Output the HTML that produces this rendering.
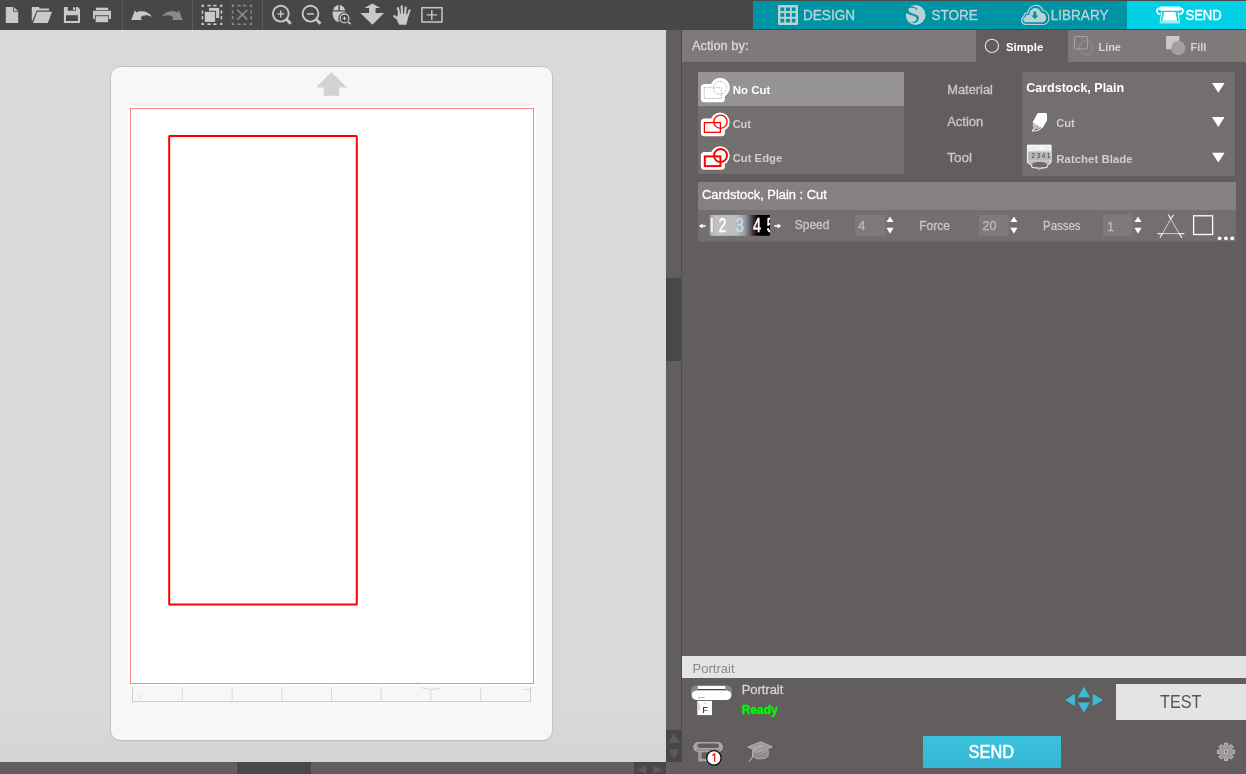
<!DOCTYPE html>
<html><head><meta charset="utf-8">
<style>
*{margin:0;padding:0;box-sizing:border-box}
html,body{width:1246px;height:774px;overflow:hidden;background:#625e5f;font-family:"Liberation Sans",sans-serif}
svg{position:absolute;left:0;top:0;will-change:transform}
text{font-family:"Liberation Sans",sans-serif}
</style></head><body>
<svg width="1246" height="774" viewBox="0 0 1246 774">
<!-- ============ BACKGROUNDS ============ -->
<rect x="0" y="0" width="1246" height="774" fill="#625e5f"/>
<rect x="0" y="0" width="1246" height="30" fill="#474747"/>
<defs><linearGradient id="cvg" x1="0" x2="0" y1="0" y2="1"><stop offset="0" stop-color="#d9d9d9"/><stop offset="0.93" stop-color="#d9d9d9"/><stop offset="1" stop-color="#d4d4d4"/></linearGradient></defs><rect x="0" y="30" width="666" height="732" fill="url(#cvg)"/>
<rect x="666" y="278" width="15" height="83" fill="#484848"/>
<rect x="681" y="30" width="1" height="732" fill="#4f4b4b"/>
<rect x="237" y="762" width="74" height="12" fill="#484848"/>
<!-- scroll buttons -->
<rect x="666" y="730" width="16" height="32" fill="#474747"/>
<path d="M674,733.2 L679.6,742.7 L668.5,742.7Z M668.5,749.3 L679.6,749.3 L674,758.7Z" fill="#5d5959"/>
<rect x="634" y="762" width="32" height="12" fill="#474747"/>
<path d="M646.5,765 L646.5,774 L637,770Z M653.3,765 L653.3,774 L662.9,770Z" fill="#5d5959"/>

<!-- ============ TOOLBAR ICONS ============ -->
<g fill="#c9c9c9">
  <!-- new doc -->
  <path d="M5.8,7 L13.2,7 L13.2,11.8 L18.2,11.8 L18.2,23 L5.8,23Z"/>
  <path d="M14.2,7.3 L17.9,10.9 L14.2,10.9Z"/>
  <!-- open folder -->
  <path d="M31.8,7 L39,7 L39.6,8.4 L49.1,8.4 L49.1,10.4 L36.8,10.4 L32.2,21.3 L31.8,21.3Z"/>
  <path d="M37.3,11.8 L52,11.8 L47.8,23 L33,23Z"/>
  <!-- save -->
  <path fill-rule="evenodd" d="M63.9,7 L67.8,7 L67.8,10.8 L76,10.8 L76,7 L77.6,7 L80,9.3 L80,23 L63.9,23Z M66,15.2 L77.9,15.2 L77.9,21 L66,21Z"/>
  <rect x="73" y="7.3" width="2.2" height="2.6"/>
  <!-- print -->
  <rect x="95.9" y="7.7" width="12.2" height="2.4"/>
  <path d="M93,10.8 L111,10.8 L111,19 L108.8,19 L108.8,15.2 L94.8,15.2 L94.8,19 L93,19Z"/>
  <rect x="95.7" y="16.2" width="12.4" height="6"/>
</g>
<rect x="122" y="0" width="1" height="30" fill="#5f5b5b"/>
<rect x="192" y="0" width="1" height="30" fill="#5f5b5b"/>
<rect x="262" y="0" width="1" height="30" fill="#5f5b5b"/>
<!-- undo / redo -->
<path d="M135,10.3 L136.3,12.4 C141,10 148.5,10.8 152.4,17.3 C148,14.6 143,14.8 140.6,17.4 L141.8,19.9 L131.2,19.9Z" fill="#c9c9c9"/>
<path d="M178.8,10.3 L177.5,12.4 C172.8,10 165.3,10.8 161.4,17.3 C165.8,14.6 170.8,14.8 173.2,17.4 L172,19.9 L182.6,19.9Z" fill="#8a8a8a"/>
<!-- group -->
<g fill="#c9c9c9"><rect x="201.70" y="4.80" width="2.3" height="1.6"/><rect x="201.70" y="4.80" width="1.6" height="2.3"/><rect x="219.90" y="4.80" width="2.3" height="1.6"/><rect x="220.60" y="4.80" width="1.6" height="2.3"/><rect x="201.70" y="23.40" width="2.3" height="1.6"/><rect x="201.70" y="22.70" width="1.6" height="2.3"/><rect x="219.90" y="23.40" width="2.3" height="1.6"/><rect x="220.60" y="22.70" width="1.6" height="2.3"/><rect x="207.43" y="4.80" width="3.3" height="1.6"/><rect x="207.43" y="23.40" width="3.3" height="1.6"/><rect x="201.70" y="10.42" width="1.6" height="3.3"/><rect x="220.60" y="10.42" width="1.6" height="3.3"/><rect x="213.17" y="4.80" width="3.3" height="1.6"/><rect x="213.17" y="23.40" width="3.3" height="1.6"/><rect x="201.70" y="16.08" width="1.6" height="3.3"/><rect x="220.60" y="16.08" width="1.6" height="3.3"/></g>
<rect x="209" y="7.9" width="10.2" height="10.1" fill="#c9c9c9"/>
<rect x="203.8" y="10.8" width="12.3" height="12.1" fill="#474747"/>
<rect x="204.8" y="11.8" width="10.3" height="10.1" fill="#c9c9c9"/>
<!-- ungroup -->
<g fill="#8a8a8a"><rect x="231.80" y="4.80" width="2.3" height="1.5"/><rect x="231.80" y="4.80" width="1.5" height="2.3"/><rect x="249.70" y="4.80" width="2.3" height="1.5"/><rect x="250.50" y="4.80" width="1.5" height="2.3"/><rect x="231.80" y="23.50" width="2.3" height="1.5"/><rect x="231.80" y="22.70" width="1.5" height="2.3"/><rect x="249.70" y="23.50" width="2.3" height="1.5"/><rect x="250.50" y="22.70" width="1.5" height="2.3"/><rect x="237.42" y="4.80" width="3.3" height="1.5"/><rect x="237.42" y="23.50" width="3.3" height="1.5"/><rect x="231.80" y="10.42" width="1.5" height="3.3"/><rect x="250.50" y="10.42" width="1.5" height="3.3"/><rect x="243.08" y="4.80" width="3.3" height="1.5"/><rect x="243.08" y="23.50" width="3.3" height="1.5"/><rect x="231.80" y="16.08" width="1.5" height="3.3"/><rect x="250.50" y="16.08" width="1.5" height="3.3"/></g>
<path d="M237.3,9.8 L247.3,19.6 M247.3,9.8 L237.3,19.6" stroke="#8a8a8a" stroke-width="1.6"/>
<!-- zoom in -->
<g stroke="#c9c9c9" fill="none">
  <circle cx="280.8" cy="13.7" r="7.9" stroke-width="1.9"/>
  <path d="M286.6,19.5 L290.8,23.7" stroke-width="2.8"/>
  <path d="M277.3,13.9 L284.3,13.9 M280.8,10.4 L280.8,17.4" stroke-width="1.4"/>
  <circle cx="310.5" cy="13.7" r="7.9" stroke-width="1.9"/>
  <path d="M316.3,19.5 L320.5,23.7" stroke-width="2.8"/>
  <path d="M307,13.9 L314,13.9" stroke-width="1.5"/>
</g>
<!-- zoom selection (mouse + magnifier) -->
<g>
  <ellipse cx="339.1" cy="13.4" rx="6.5" ry="8.6" fill="#c9c9c9"/>
  <rect x="338.5" y="4" width="1.3" height="7" fill="#474747"/>
  <rect x="332" y="10.3" width="14" height="1.2" fill="#474747"/>
  <circle cx="344.5" cy="18.4" r="6.2" fill="#474747"/>
  <circle cx="344.5" cy="18.4" r="4.4" fill="none" stroke="#c9c9c9" stroke-width="1.3"/>
  <path d="M347.6,21.5 L350.8,24.4" stroke="#474747" stroke-width="3"/>
  <path d="M347.6,21.5 L350.6,24.2" stroke="#c9c9c9" stroke-width="1.6"/>
  <path d="M342.6,18.4 L346.4,18.4 M344.5,16.5 L344.5,20.3" stroke="#c9c9c9" stroke-width="1"/>
</g>
<!-- fit arrow -->
<path d="M372.4,3.4 L380.2,8 L375.6,8 L375.6,13 L384,13 L372.4,24.8 L360.4,13 L369.1,13 L369.1,8 L364.4,8Z" fill="#c9c9c9"/>
<!-- hand -->
<g stroke="#c9c9c9" stroke-linecap="round" fill="none">
  <path d="M397.9,8 L399.6,15" stroke-width="2.1"/>
  <path d="M401.7,6.2 L402,15" stroke-width="2.1"/>
  <path d="M405.7,7.5 L404.8,15" stroke-width="2.1"/>
  <path d="M409.6,10.2 L407.4,16.5" stroke-width="2"/>
  <path d="M394.3,16.2 L399,20" stroke-width="2.2"/>
</g>
<path d="M398,13.5 L408.5,14.2 L407.8,19 L406.3,24.8 L399.2,24.8 L396.5,19Z" fill="#c9c9c9"/>
<!-- frame plus -->
<rect x="421.9" y="7.7" width="20.1" height="14.3" fill="none" stroke="#c9c9c9" stroke-width="1.5"/>
<path d="M426.6,14.9 L437.2,14.9 M431.8,9.9 L431.8,20" stroke="#c9c9c9" stroke-width="1.4"/>

<!-- ============ NAV ============ -->
<rect x="753" y="1" width="374" height="28" fill="#0093a3"/>
<rect x="1127" y="1" width="119" height="28" fill="#00d1e7"/>
<!-- grid icon -->
<rect x="778" y="5" width="20" height="20" rx="1.2" fill="#b9d2d6"/>
<g fill="#0093a3">
  <rect x="780.4" y="7.5" width="3.8" height="3.6"/><rect x="785.9" y="7.5" width="4.1" height="3.6"/><rect x="791.8" y="7.5" width="3.7" height="3.6"/>
  <rect x="780.4" y="13.1" width="3.8" height="3.7"/><rect x="785.9" y="13.1" width="4.1" height="3.7"/><rect x="791.8" y="13.1" width="3.7" height="3.7"/>
  <rect x="780.4" y="18.8" width="3.8" height="3.7"/><rect x="785.9" y="18.8" width="4.1" height="3.7"/><rect x="791.8" y="18.8" width="3.7" height="3.7"/>
</g>
<text stroke="#b9d5d9" stroke-width="0.3" x="803" y="20" font-size="14.7" fill="#b9d5d9" textLength="52" lengthAdjust="spacingAndGlyphs">DESIGN</text>
<!-- store S -->
<circle cx="915.6" cy="15" r="9.9" fill="#b9d2d6"/>
<path d="M909.2,7.2 C908.2,8.8 908.2,11.2 909.6,12.3 C911.5,13.6 916,14.2 918.2,16 C919.3,17.3 919,20.5 917,21.9 C915.3,23 912.5,23.3 910.5,23 C913.2,22.6 915.8,21.5 916.6,19.5 C917.2,17.8 915.8,16.6 913.5,15.8 C910.8,15 907.8,14.3 906,13 L904,13 L904,4 L909,4Z" fill="#0093a3"/><path d="M909,7.4 C912,6.7 915.5,7.2 917.4,9.6" fill="none" stroke="#0093a3" stroke-width="1.2"/>
<text stroke="#b9d5d9" stroke-width="0.3" x="931.5" y="20" font-size="14.7" fill="#b9d5d9" textLength="46.2" lengthAdjust="spacingAndGlyphs">STORE</text>
<!-- cloud -->
<path d="M1025.5,24.3 C1021.5,24.3 1020.2,18.5 1023.7,16.5 C1024.2,13.5 1026.5,12.8 1027.8,13 C1028.8,4 1040.5,2.8 1042.8,10.5 C1050,11 1051.5,23.8 1043.5,24.5Z" fill="none" stroke="#b9d2d6" stroke-width="1.2"/>
<path d="M1025.8,22.2 C1022.8,22.2 1022.4,17.6 1025.3,17.3 C1025.3,15 1027.5,14.5 1029.2,15 C1029.6,6.6 1039.2,5.6 1041,12.6 C1047.2,12.8 1048,22.2 1042.5,22.2Z" fill="#b9d2d6"/>
<path d="M1033.4,11.4 L1036.3,11.4 L1036.3,15.4 L1038.8,15.4 L1034.85,19.1 L1031.3,15.4 L1033.4,15.4Z" fill="#0093a3"/>
<text stroke="#b9d5d9" stroke-width="0.3" x="1050.7" y="20" font-size="14.7" fill="#b9d5d9" textLength="57.8" lengthAdjust="spacingAndGlyphs">LIBRARY</text>
<!-- send machine icon -->
<g fill="#ffffff">
  <rect x="1158.9" y="6.4" width="22.1" height="4.3" rx="2"/>
  <path d="M1157.9,8.6 C1156,10.8 1156.6,13.6 1159.8,14.1" fill="none" stroke="#fff" stroke-width="1.9" stroke-linecap="round"/>
  <path d="M1181.9,8.6 C1183.8,10.8 1183.2,13.6 1180,14.1" fill="none" stroke="#fff" stroke-width="1.9" stroke-linecap="round"/>
  <path d="M1164.1,12 L1175.5,12 L1177.2,20.8 L1162.4,20.8Z"/>
  <path d="M1161.3,12 L1162.4,12 L1160.8,21.5 L1159.8,21.5Z"/>
  <path d="M1177.4,12 L1178.5,12 L1180,21.5 L1179,21.5Z"/>
</g>
<rect x="1159.7" y="20.8" width="20.2" height="2.7" fill="#9aeef5"/>
<text x="1185.4" y="20" font-size="15" fill="#ffffff" stroke="#ffffff" stroke-width="0.45" textLength="36.4" lengthAdjust="spacingAndGlyphs">SEND</text>

<!-- ============ MAT ============ -->
<rect x="110.5" y="67.5" width="442" height="674" rx="10" fill="#c8c8c8"/><rect x="110.5" y="66.5" width="442" height="674" rx="10" fill="#f7f7f7" stroke="#c2c2c2" stroke-width="1"/>
<path d="M331.4,71.9 L347.1,87.6 L339.3,87.6 L339.3,95.8 L323.8,95.8 L323.8,87.6 L316,87.6Z" fill="#d1d2d2"/>
<rect x="127.5" y="105" width="409" height="581" fill="#ffffff"/>
<rect x="132.5" y="104.5" width="398" height="1" fill="#e3e3e3"/>
<rect x="130.5" y="108.5" width="403" height="575" fill="none" stroke="#ff8585" stroke-width="1"/>
<rect x="169.2" y="136" width="187.6" height="468.6" fill="none" stroke="#ff0000" stroke-width="2" rx="0.5"/>
<!-- ruler -->
<text x="137" y="699" font-size="6" fill="#d8d8d8">½</text>
<path d="M132.5,687 L132.5,701.5 L530.5,701.5 L530.5,687" fill="none" stroke="#cdcdcd" stroke-width="1"/>
<g stroke="#dadada" stroke-width="1">
  <path d="M182.3,687 L182.3,701 M232.1,687 L232.1,701 M281.8,687 L281.8,701 M331.5,687 L331.5,701 M381.2,687 L381.2,701 M430.9,689 L430.9,701 M480.6,687 L480.6,701 M523,689.5 L530,689.5"/>
</g>
<path d="M421.5,687.3 C425,690 437,690 440.5,687.3" fill="none" stroke="#d5d5d5" stroke-width="1"/>

<!-- ============ PANEL ============ -->
<rect x="682" y="30" width="564" height="32" fill="#7f7a79"/>
<text stroke="#dad7d7" stroke-width="0.3" x="692" y="49.8" font-size="12.5" fill="#dad7d7" textLength="56.5" lengthAdjust="spacingAndGlyphs">Action by:</text>
<rect x="976" y="30" width="92" height="32" fill="#625e5f"/>
<circle cx="991.9" cy="45.9" r="6.6" fill="none" stroke="#e6e4e4" stroke-width="1.1"/>
<text x="1006" y="51" font-size="11.3" font-weight="bold" fill="#ffffff" textLength="37.2" lengthAdjust="spacingAndGlyphs">Simple</text>

<rect x="1074.5" y="36.5" width="13" height="12.5" rx="1" fill="none" stroke="#a8a5a5" stroke-width="1"/>
<circle cx="1086.2" cy="48" r="6.7" fill="none" stroke="#9a9696" stroke-width="1"/>
<text x="1098.5" y="51" font-size="11.3" font-weight="bold" fill="#d6d3d3" textLength="22.4" lengthAdjust="spacingAndGlyphs">Line</text>
<rect x="1166.1" y="36" width="13.3" height="13.2" fill="#cac8c8"/>
<circle cx="1178.3" cy="48" r="7.2" fill="#a3a0a0"/>
<text x="1190.6" y="51" font-size="11.3" font-weight="bold" fill="#d6d3d3" textLength="15.6" lengthAdjust="spacingAndGlyphs">Fill</text>

<!-- list -->
<rect x="698" y="72" width="206" height="102" fill="#736f6f"/>
<rect x="698" y="72" width="206" height="34" fill="#959393"/>
<!-- icon blobs -->
<g fill="#ffffff">
  <rect x="700.9" y="84" width="24" height="18.2" rx="3.5"/>
  <circle cx="720.1" cy="87.6" r="9.8"/>
  <rect x="700.9" y="118.5" width="24" height="17.8" rx="3.5"/>
  <circle cx="720.1" cy="122" r="9.6"/>
  <rect x="700.9" y="152" width="24" height="17.8" rx="3.5"/>
  <circle cx="720.1" cy="155.8" r="9.6"/>
</g>
<g fill="none" stroke="#8a8a8a" stroke-width="0.9" stroke-dasharray="1,1.4">
  <rect x="704.3" y="87.7" width="17" height="10.8"/>
  <circle cx="720" cy="87.7" r="6.6"/>
</g>
<g fill="none" stroke="#ff0000">
  <rect x="704.4" y="122.6" width="16" height="9.7" stroke-width="1.3"/>
  <circle cx="720.5" cy="121.7" r="6.6" stroke-width="1.3"/>
  <rect x="704.8" y="156.4" width="15.6" height="9.7" stroke-width="2"/>
  <circle cx="720.5" cy="155.5" r="6.5" stroke-width="2"/>
</g>
<text x="732.7" y="94.3" font-size="11.3" font-weight="bold" fill="#ffffff" textLength="37.6" lengthAdjust="spacingAndGlyphs">No Cut</text>
<text x="732.7" y="128.3" font-size="11.3" font-weight="bold" fill="#d0cdcd" textLength="18.1" lengthAdjust="spacingAndGlyphs">Cut</text>
<text x="732.7" y="162.3" font-size="11.3" font-weight="bold" fill="#d0cdcd" textLength="49.5" lengthAdjust="spacingAndGlyphs">Cut Edge</text>

<!-- labels -->
<text stroke="#ccc8c8" stroke-width="0.3" x="947.2" y="94" font-size="12.5" fill="#ccc8c8" textLength="45.8" lengthAdjust="spacingAndGlyphs">Material</text>
<text stroke="#ccc8c8" stroke-width="0.3" x="947.2" y="126.3" font-size="12.5" fill="#ccc8c8" textLength="36.1" lengthAdjust="spacingAndGlyphs">Action</text>
<text stroke="#ccc8c8" stroke-width="0.3" x="947.2" y="161.9" font-size="12.5" fill="#ccc8c8" textLength="24.8" lengthAdjust="spacingAndGlyphs">Tool</text>

<rect x="1022" y="72" width="213" height="104" fill="#736f6f"/>
<text x="1026.2" y="92.1" font-size="12.3" font-weight="bold" fill="#ffffff" textLength="98" lengthAdjust="spacingAndGlyphs">Cardstock, Plain</text>
<path d="M1212,82.9 L1224.6,82.9 L1218.3,92.8Z M1212,116.9 L1224.6,116.9 L1218.3,127Z M1212,152.8 L1224.6,152.8 L1218.3,162.4Z" fill="#ffffff"/>
<!-- knife icon -->
<path d="M1037.7,113.1 L1047,113.1 L1047,120.4 L1042.3,128.5 L1032.5,122.5Z" fill="#ffffff"/>
<path d="M1033.2,124 L1040.8,128.6 L1038.6,130.3 L1032.3,131.2 L1034.2,127.6Z" fill="none" stroke="#ffffff" stroke-width="0.9"/>
<path d="M1034.5,126.8 L1039,129.3 M1032.5,130.8 L1036.5,127.5" stroke="#ffffff" stroke-width="0.8"/>
<circle cx="1046.6" cy="113.5" r="0.6" fill="#ff7070"/>
<text x="1056.3" y="127" font-size="11.3" font-weight="bold" fill="#d0cdcd" textLength="18.5" lengthAdjust="spacingAndGlyphs">Cut</text>
<!-- ratchet icon -->
<defs><linearGradient id="rat" x1="0" x2="0" y1="0" y2="1"><stop offset="0" stop-color="#f2f2f2"/><stop offset="0.35" stop-color="#e6e6e6"/><stop offset="0.7" stop-color="#bdbdbd"/><stop offset="1" stop-color="#8a8888"/></linearGradient></defs>
<path d="M1027.4,145.1 L1051.1,145.1 L1051.1,162.6 L1047.5,165.3 L1047,167.5 L1040.5,168.3 L1039.5,169.6 L1038.5,168.3 L1032,167.5 L1031.5,165.3 L1027.4,162.6Z" fill="url(#rat)" stroke="#ffffff" stroke-width="0.9"/>
<path d="M1032.5,163.5 C1034,161.5 1045,161.5 1046.5,163.5 L1046.5,167 L1032.5,167Z" fill="#6f6b6b"/>
<rect x="1028" y="151.5" width="22.6" height="8.5" fill="#b9b7b7"/><text x="1031.5" y="158.3" font-size="6.5" fill="#3a3a3a" textLength="19" lengthAdjust="spacingAndGlyphs">2 3 4 1</text>
<rect x="1038" y="147.5" width="7" height="1.2" fill="#ffffff"/>
<text x="1056.3" y="163.1" font-size="11.3" font-weight="bold" fill="#d0cdcd" textLength="76.3" lengthAdjust="spacingAndGlyphs">Ratchet Blade</text>

<!-- cardstock header + settings -->
<rect x="698" y="182" width="538" height="28" fill="#858181"/>
<text stroke="#ffffff" stroke-width="0.3" x="702" y="198.8" font-size="12.8" fill="#ffffff" textLength="124.9" lengthAdjust="spacingAndGlyphs">Cardstock, Plain : Cut</text>
<rect x="698" y="210" width="538" height="31.5" fill="#736f6f"/>
<!-- arrows -->
<path d="M698.9,226 L702.6,223.4 L702.6,225.3 L705.8,225.3 L705.8,226.7 L702.6,226.7 L702.6,228.6Z" fill="#ffffff"/>
<path d="M781.3,226 L777.6,223.4 L777.6,225.3 L774.2,225.3 L774.2,226.7 L777.6,226.7 L777.6,228.6Z" fill="#ffffff"/>
<!-- dial -->
<defs>
  <linearGradient id="dial" x1="0" x2="1" y1="0" y2="0">
    <stop offset="0" stop-color="#a4a4a4"/>
    <stop offset="0.1" stop-color="#c2c2c2"/>
    <stop offset="0.45" stop-color="#bdbdbd"/>
    <stop offset="0.58" stop-color="#9a9ca4"/>
    <stop offset="0.66" stop-color="#66626c"/>
    <stop offset="0.73" stop-color="#3a2826"/>
    <stop offset="0.8" stop-color="#000000"/>
    <stop offset="1" stop-color="#000000"/>
  </linearGradient>
  <clipPath id="dialclip"><rect x="709.7" y="215" width="60.3" height="20.8"/></clipPath>
</defs>
<rect x="709.7" y="215" width="60.3" height="20.8" fill="url(#dial)"/>
<g clip-path="url(#dialclip)" font-size="20" fill="#ffffff" stroke-width="0.6">
  <rect x="710.8" y="217.9" width="2" height="14.5" fill="#f2f2f2"/>
  <text x="718.8" y="232.4" stroke="#ffffff" textLength="7.5" lengthAdjust="spacingAndGlyphs">2</text>
  <text x="735.4" y="232.4" fill="#bcdcf2" stroke="#bcdcf2" textLength="8.4" lengthAdjust="spacingAndGlyphs">3</text>
  <text x="752.9" y="232.4" stroke="#ffffff" textLength="8" lengthAdjust="spacingAndGlyphs">4</text>
  <text x="766.8" y="232.4" stroke="#ffffff" textLength="7.5" lengthAdjust="spacingAndGlyphs">5</text>
</g>
<text stroke="#ccc8c8" stroke-width="0.3" x="794.8" y="229.3" font-size="12.5" fill="#ccc8c8" textLength="34.6" lengthAdjust="spacingAndGlyphs">Speed</text>
<rect x="855.2" y="214.8" width="29.8" height="21" fill="#7e7a7a"/>
<text stroke="#bebaba" stroke-width="0.3" x="858.2" y="230.3" font-size="12.5" fill="#bebaba">4</text>
<path d="M890,216.5 L893.6,221.9 L886.4,221.9Z M886.4,227.8 L893.6,227.8 L890,233.7Z" fill="#ffffff"/>
<text stroke="#ccc8c8" stroke-width="0.3" x="919.2" y="230.3" font-size="12.5" fill="#ccc8c8" textLength="30.7" lengthAdjust="spacingAndGlyphs">Force</text>
<rect x="979" y="214.8" width="29.9" height="21" fill="#7e7a7a"/>
<text stroke="#bebaba" stroke-width="0.3" x="982.4" y="230.3" font-size="12.5" fill="#bebaba" textLength="14" lengthAdjust="spacingAndGlyphs">20</text>
<path d="M1013.9,216.5 L1017.5,221.9 L1010.3,221.9Z M1010.3,227.8 L1017.5,227.8 L1013.9,233.7Z" fill="#ffffff"/>
<text stroke="#ccc8c8" stroke-width="0.3" x="1043.1" y="230.3" font-size="12.5" fill="#ccc8c8" textLength="37.4" lengthAdjust="spacingAndGlyphs">Passes</text>
<rect x="1102.8" y="214.5" width="29.8" height="21.8" fill="#7e7a7a"/>
<text stroke="#bebaba" stroke-width="0.3" x="1106.9" y="230.5" font-size="12.5" fill="#bebaba">1</text>
<path d="M1138,216.5 L1141.6,221.9 L1134.4,221.9Z M1134.4,227.8 L1141.6,227.8 L1138,233.7Z" fill="#ffffff"/>
<!-- triangle icon -->
<path d="M1162.5,233.6 L1170.7,218.9 L1179.2,233.6Z" fill="none" stroke="#cfcccc" stroke-width="1"/>
<path d="M1170.7,218.9 L1168.5,215 M1170.7,218.9 L1173.4,215 M1157.9,233.6 L1162.5,233.6 L1160.2,237.3 M1179.2,233.6 L1184,233.6 M1179.2,233.6 L1181.7,237.3" fill="none" stroke="#ecebeb" stroke-width="1.2" stroke-linecap="round"/>
<rect x="1193.6" y="215.8" width="19" height="18.7" fill="none" stroke="#ffffff" stroke-width="1.3"/>
<g fill="#ffffff"><circle cx="1219.6" cy="238.3" r="1.9"/><circle cx="1225.9" cy="238.3" r="1.9"/><circle cx="1232.2" cy="238.3" r="1.9"/></g>

<!-- ============ BOTTOM PANEL ============ -->
<rect x="682" y="656" width="564" height="22" fill="#e4e4e4"/>
<text x="692.5" y="672.7" font-size="12.8" fill="#8c8a8a" textLength="42" lengthAdjust="spacingAndGlyphs">Portrait</text>
<!-- machine icon -->
<path d="M695,685.5 L728,685.5 C733.5,685.5 733.5,697 728,697 L695,697 C689.5,697 689.5,685.5 695,685.5Z" fill="#8a8686"/>
<path d="M696.5,690.6 L726.5,690.6 C733,690.6 733,700.1 726.5,700.1 L696.5,700.1 C690,700.1 690,690.6 696.5,690.6Z" fill="#ffffff"/>
<rect x="697.8" y="685.9" width="27.5" height="3.3" fill="#ffffff"/>
<rect x="697.8" y="689.2" width="27.5" height="0.8" fill="#333333"/>
<path d="M698,697.6 L704.5,697.6" stroke="#4aa0d0" stroke-width="0.7"/>
<rect x="697.3" y="700.9" width="14.7" height="14.2" fill="#fbfbfb"/>
<path d="M699,703.2 L699,709.8" stroke="#ff8080" stroke-width="0.8"/>
<path d="M704.5,702.6 L705.5,703.8" stroke="#6060ff" stroke-width="0.6"/>
<text x="702.6" y="712.6" font-size="8.8" fill="#000000">F</text>
<text stroke="#d6d3d3" stroke-width="0.3" x="741.7" y="694.1" font-size="12.8" fill="#d6d3d3" textLength="41.6" lengthAdjust="spacingAndGlyphs">Portrait</text>
<text x="741.7" y="713.8" font-size="12" font-weight="bold" fill="#00ff00" stroke="#00ff00" stroke-width="0.35" textLength="36" lengthAdjust="spacingAndGlyphs">Ready</text>

<!-- arrows -->
<g fill="#3bbdd9">
  <path d="M1065.2,700 L1074.9,693.7 L1074.9,706.1Z"/>
  <path d="M1103,700 L1092.8,693.7 L1092.8,706.1Z"/>
  <path d="M1083.9,686.7 L1089.9,697.2 L1077.9,697.2Z"/>
  <path d="M1077.9,702.4 L1089.9,702.4 L1083.9,712.5Z"/>
</g>
<rect x="1078.5" y="698.4" width="11" height="3.2" fill="#545050"/>
<rect x="1116" y="684" width="130" height="36" fill="#e4e4e4"/>
<text x="1160" y="708.1" font-size="17.5" fill="#555555" textLength="41.5" lengthAdjust="spacingAndGlyphs">TEST</text>

<defs><linearGradient id="sendg" x1="0" x2="0" y1="0" y2="1"><stop offset="0" stop-color="#3bc2dc"/><stop offset="1" stop-color="#37b6d3"/></linearGradient></defs><rect x="923" y="736" width="138" height="32" fill="url(#sendg)"/>
<text x="968.6" y="758.2" font-size="17.5" fill="#ffffff" stroke="#ffffff" stroke-width="0.5" textLength="45.4" lengthAdjust="spacingAndGlyphs">SEND</text>

<!-- bottom-left icons -->
<rect x="693.2" y="742" width="29.8" height="10.2" rx="5.1" fill="#a9a6a6"/>
<rect x="697.3" y="743.4" width="21.9" height="4.6" rx="2.3" fill="#625e5f"/>
<rect x="696" y="749.6" width="24" height="0.9" fill="#7e7b7b"/>
<rect x="698.4" y="751" width="3.1" height="10.3" fill="#a9a6a6"/>
<rect x="699.4" y="752" width="1.1" height="8" fill="#8e8b8b"/>
<rect x="698.4" y="758.8" width="9" height="2.5" fill="#a9a6a6"/>
<circle cx="713.9" cy="757.9" r="7.2" fill="#ffffff" stroke="#111111" stroke-width="1.3"/>
<path d="M712.2,755.6 L714.7,753.8 L714.7,762" fill="none" stroke="#ff0000" stroke-width="1.2"/>
<!-- grad cap -->
<path d="M752.7,750 L752.7,756 C755,759.8 766,759.8 768.2,756 L768.2,750 L760,753.8Z" fill="#8f8c8c" stroke="#b3b0b0" stroke-width="0.9"/>
<path d="M747.8,747 L760.5,741.7 L772.4,746.8 L760,752.2Z" fill="#9d9a9a" stroke="#b8b5b5" stroke-width="0.9"/>
<path d="M764,745.5 L755,748 L753.5,750 L752.5,757 L749,761.5" fill="none" stroke="#b8b5b5" stroke-width="1.1"/>
<!-- gear -->
<g><path d="M1224.30,746.18 L1224.30,743.20 L1227.90,743.20 L1227.90,746.18 A5.9,5.9 0 0 1 1228.80,746.55 L1230.91,744.45 L1233.45,746.99 L1231.35,749.10 A5.9,5.9 0 0 1 1231.72,750.00 L1234.70,750.00 L1234.70,753.60 L1231.72,753.60 A5.9,5.9 0 0 1 1231.35,754.50 L1233.45,756.61 L1230.91,759.15 L1228.80,757.05 A5.9,5.9 0 0 1 1227.90,757.42 L1227.90,760.40 L1224.30,760.40 L1224.30,757.42 A5.9,5.9 0 0 1 1223.40,757.05 L1221.29,759.15 L1218.75,756.61 L1220.85,754.50 A5.9,5.9 0 0 1 1220.48,753.60 L1217.50,753.60 L1217.50,750.00 L1220.48,750.00 A5.9,5.9 0 0 1 1220.85,749.10 L1218.75,746.99 L1221.29,744.45 L1223.40,746.55 A5.9,5.9 0 0 1 1224.30,746.18 Z" fill="#9a9898" stroke="#c2c0c0" stroke-width="0.9" stroke-linejoin="round"/><circle cx="1226.1" cy="751.8" r="1.8" fill="none" stroke="#d0cece" stroke-width="0.9"/><circle cx="1226.1" cy="751.8" r="1" fill="#5a5656"/></g>
</svg>
</body></html>
